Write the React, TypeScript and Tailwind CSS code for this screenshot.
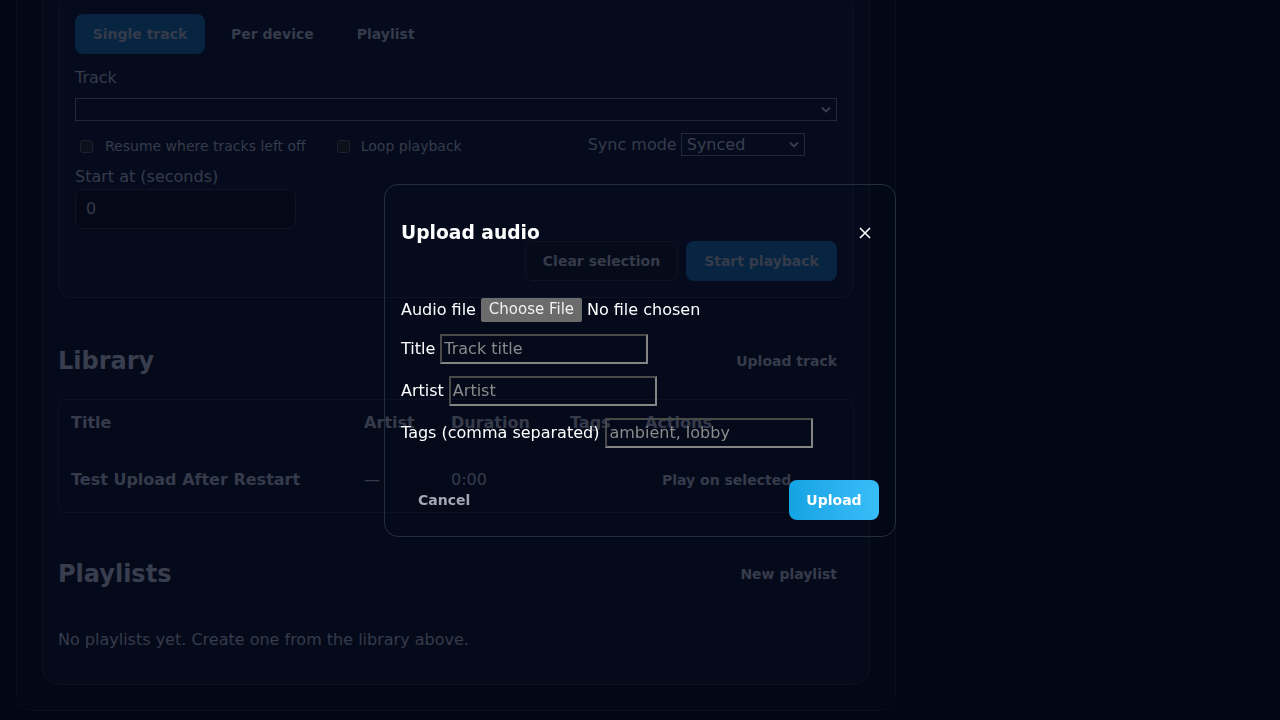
import { useState } from "react";

const dim = "text-[#363b4b]";

function Chevron({ className = "" }: { className?: string }) {
  return (
    <svg width="10" height="7" viewBox="0 0 10 7" className={className}>
      <path d="M1 1.5 L5 5.5 L9 1.5" fill="none" stroke="currentColor" strokeWidth="1.8" />
    </svg>
  );
}

function FakeCheckbox() {
  return <span className="ml-[5px] inline-block h-[13px] w-[13px] rounded-[3px] border border-[#1c212d] bg-[#0c101a]" />;
}

export default function App() {
  const [title, setTitle] = useState("");
  const [artist, setArtist] = useState("");
  const [tags, setTags] = useState("");

  const inputCls =
    "ml-[5px] h-[30px] w-[208px] border-2 border-b-[#858585] border-l-[#494949] border-r-[#858585] border-t-[#494949] bg-transparent px-[2px] text-white outline-none placeholder:text-[#8a8a8a]";

  return (
    <div className="relative h-[720px] overflow-hidden bg-[#020615] font-['DejaVu_Sans',sans-serif]">
      {/* page, scrolled down a little */}
      <div className="-mt-[45px] ml-[16px] w-[880px] rounded-2xl border border-[#0a0f1e] bg-[#030817] p-[25px]">
        <div className="rounded-2xl border border-[#0c1222] bg-[#050a1b] pb-[32px] pl-[15px] pr-[15px] pt-[15px]">
          {/* playback */}
          <section className="rounded-xl border border-[#0d1324] bg-[#050b1c] p-4">
            <div className="flex gap-[9px]">
              <span className="flex h-[40px] w-[130px] items-center justify-center rounded-lg bg-[#072540] text-sm font-bold text-[#353b4b]">
                Single track
              </span>
              <span className={`flex h-[40px] items-center px-[17px] text-sm font-bold ${dim}`}>Per device</span>
              <span className={`flex h-[40px] items-center px-[17px] text-sm font-bold ${dim}`}>Playlist</span>
            </div>

            <div className={`mt-[12px] text-base leading-6 ${dim}`}>Track</div>
            <div className="mt-[8px] flex h-[23px] items-center justify-end border border-[#222838] pr-[5px] text-[#3a3f4e]">
              <Chevron />
            </div>

            <div className={`mt-[12px] flex h-[23px] items-center text-sm ${dim}`}>
              <span className="mt-[3px] flex items-center">
                <FakeCheckbox />
                <span className="ml-[12px]">Resume where tracks left off</span>
              </span>
              <span className="ml-[26px] mt-[3px] flex items-center">
                <FakeCheckbox />
                <span className="ml-[11px]">Loop playback</span>
              </span>
              <span className="ml-[126px] text-base">Sync mode</span>
              <span className="ml-[4px] flex h-[23px] w-[124px] items-center justify-between border border-[#222838] pl-[5px] pr-[5px] text-base text-[#3a3f4e]">
                Synced
                <Chevron />
              </span>
            </div>

            <div className={`mt-[9px] text-base leading-6 ${dim}`}>Start at (seconds)</div>
            <div className="flex h-[40px] w-[221px] items-center rounded-lg border border-[#101524] bg-[#040817] px-[10px] text-base text-[#353a4a]">
              0
            </div>

            <div className="mt-[12px] flex justify-end gap-2">
              <span className={`flex h-[40px] w-[153px] items-center justify-center rounded-lg border border-[#0f1424] bg-[#060b1a] text-sm font-bold ${dim}`}>
                Clear selection
              </span>
              <span className={`flex h-[40px] w-[151px] items-center justify-center rounded-lg bg-[#072540] text-sm font-bold ${dim}`}>
                Start playback
              </span>
            </div>
          </section>

          {/* library */}
          <div className="mt-[47px] flex h-[32px] items-center justify-between">
            <h2 className="text-2xl font-bold text-[#393e4e]">Library</h2>
            <span className={`pr-[17px] text-sm font-bold ${dim}`}>Upload track</span>
          </div>
          <div className="mt-[22px] rounded-md border border-[#0b1121]">
            <div className={`grid h-[46px] grid-cols-[293px_87px_119px_75px_1fr] items-center text-base font-bold ${dim}`}>
              <span className="pl-3">Title</span>
              <span className="pl-3">Artist</span>
              <span className="pl-3">Duration</span>
              <span className="pl-3">Tags</span>
              <span className="pl-3">Actions</span>
            </div>
            <div className={`grid h-[66px] grid-cols-[293px_87px_119px_75px_1fr] items-center pt-[1px] text-base ${dim}`}>
              <span className="pl-3 font-bold">Test Upload After Restart</span>
              <span className="pl-3">—</span>
              <span className="pl-3">0:00</span>
              <span></span>
              <span className="pl-[29px] text-sm font-bold">Play on selected</span>
            </div>
          </div>

          {/* playlists */}
          <div className="mt-[45px] flex h-[32px] items-center justify-between">
            <h2 className="text-2xl font-bold text-[#393e4e]">Playlists</h2>
            <span className={`pr-[17px] text-sm font-bold ${dim}`}>New playlist</span>
          </div>
          <p className={`mt-[38px] text-base leading-6 ${dim}`}>No playlists yet. Create one from the library above.</p>
        </div>
      </div>

      {/* upload dialog */}
      <div className="fixed inset-0 flex items-center justify-center">
        <div className="w-[512px] rounded-[14px] border border-[#262d3d] px-4 pb-4 pt-[35px] text-white">
          <div className="flex h-[28px] items-center justify-between">
            <h3 className="text-[18.7px] font-bold">Upload audio</h3>
            <button className="relative -top-[1px] mr-[8px] text-white" aria-label="Close">
              <svg width="12" height="12" viewBox="0 0 12 12">
                <path d="M1 1 L11 11 M11 1 L1 11" stroke="currentColor" strokeWidth="1.6" />
              </svg>
            </button>
          </div>

          <div className="mt-[50px] flex flex-col gap-3 text-base">
            <div className="flex h-[24px] items-center">
              <span>Audio file</span>
              <span className="ml-[5px] flex h-[24px] w-[101px] items-center justify-center rounded-[2px] bg-[#6b6b6b] text-[15px] text-[#f0f0f0]">
                Choose File
              </span>
              <span className="ml-[5px]">No file chosen</span>
            </div>
            <div className="flex h-[30px] items-center">
              <span>Title</span>
              <input value={title} onChange={(e) => setTitle(e.target.value)} placeholder="Track title" className={inputCls} />
            </div>
            <div className="flex h-[30px] items-center">
              <span>Artist</span>
              <input value={artist} onChange={(e) => setArtist(e.target.value)} placeholder="Artist" className={inputCls} />
            </div>
            <div className="flex h-[30px] items-center">
              <span>Tags (comma separated)</span>
              <input value={tags} onChange={(e) => setTags(e.target.value)} placeholder="ambient, lobby" className={`${inputCls} ml-[6px]`} />
            </div>
          </div>

          <div className="mt-[32px] flex items-center justify-between">
            <button className="h-[40px] px-[17px] text-sm font-bold text-[#a3a8b3]">Cancel</button>
            <button className="h-[40px] w-[90px] rounded-lg bg-gradient-to-r from-[#14a3e4] to-[#38bdf8] text-sm font-bold text-white">
              Upload
            </button>
          </div>
        </div>
      </div>
    </div>
  );
}
